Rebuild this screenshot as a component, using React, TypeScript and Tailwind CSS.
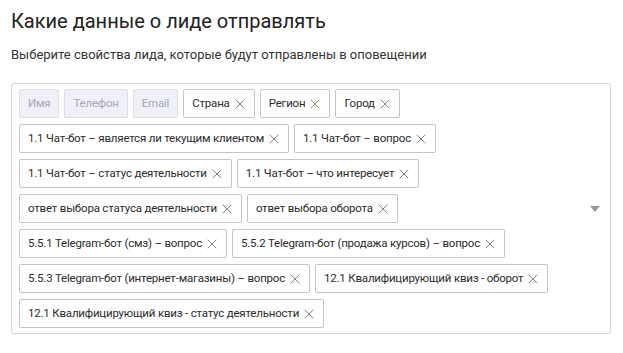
import { X } from 'lucide-react';

type Chip = { label: string; locked?: boolean };

const chips: Chip[] = [
	{ label: 'Имя', locked: true },
	{ label: 'Телефон', locked: true },
	{ label: 'Email', locked: true },
	{ label: 'Страна' },
	{ label: 'Регион' },
	{ label: 'Город' },
	{ label: '1.1 Чат-бот – является ли текущим клиентом' },
	{ label: '1.1 Чат-бот – вопрос' },
	{ label: '1.1 Чат-бот – статус деятельности' },
	{ label: '1.1 Чат-бот – что интересует' },
	{ label: 'ответ выбора статуса деятельности' },
	{ label: 'ответ выбора оборота' },
	{ label: '5.5.1 Telegram-бот (смз) – вопрос' },
	{ label: '5.5.2 Telegram-бот (продажа курсов) – вопрос' },
	{ label: '5.5.3 Telegram-бот (интернет-магазины) – вопрос' },
	{ label: '12.1 Квалифицирующий квиз - оборот' },
	{ label: '12.1 Квалифицирующий квиз - статус деятельности' }
];

const App = () => {
	return (
		<div className="w-[623px] h-[353px] bg-white px-[11px] pt-[9px] font-['Roboto',sans-serif] text-[#2b2b2b]">
			<h2 className="text-[20px] leading-[24px] font-normal text-[#222]">Какие данные о лиде отправлять</h2>
			<p className="mt-[14px] text-[13px] leading-[16px] text-[#333]">
				Выберите свойства лида, которые будут отправлены в оповещении
			</p>

			{/* Select box */}
			<div className="mt-[20px] w-[600px] flex items-center border border-[#d4d4d4] rounded-[3px] pl-[7px] py-[5px] pr-[10px]">
				<div className="flex-1 flex flex-wrap gap-x-[5px] gap-y-[6px]">
					{chips.map((c) => (
						<div
							key={c.label}
							className={
								c.locked
									? 'h-[29px] flex items-center px-[8px] text-[11.5px] tracking-[-0.2px] rounded-[2px] border border-[#dcdde8] bg-[#eff0f8] text-[#a8a8b0]'
									: 'h-[29px] flex items-center pl-[8px] pr-[6px] text-[11.5px] tracking-[-0.2px] rounded-[2px] border border-[#c4c4c4] bg-white text-[#2b2b2b]'
							}
						>
							<span>{c.label}</span>
							{!c.locked && <X className="w-[16px] h-[16px] ml-[2px] text-[#555]" strokeWidth={1.1} />}
						</div>
					))}
				</div>
				<svg className="w-[10px] h-[6px] ml-[8px] shrink-0" viewBox="0 0 10 6">
					<path d="M0 0h10L5 6z" fill="#999" />
				</svg>
			</div>
		</div>
	);
};

export default App;
